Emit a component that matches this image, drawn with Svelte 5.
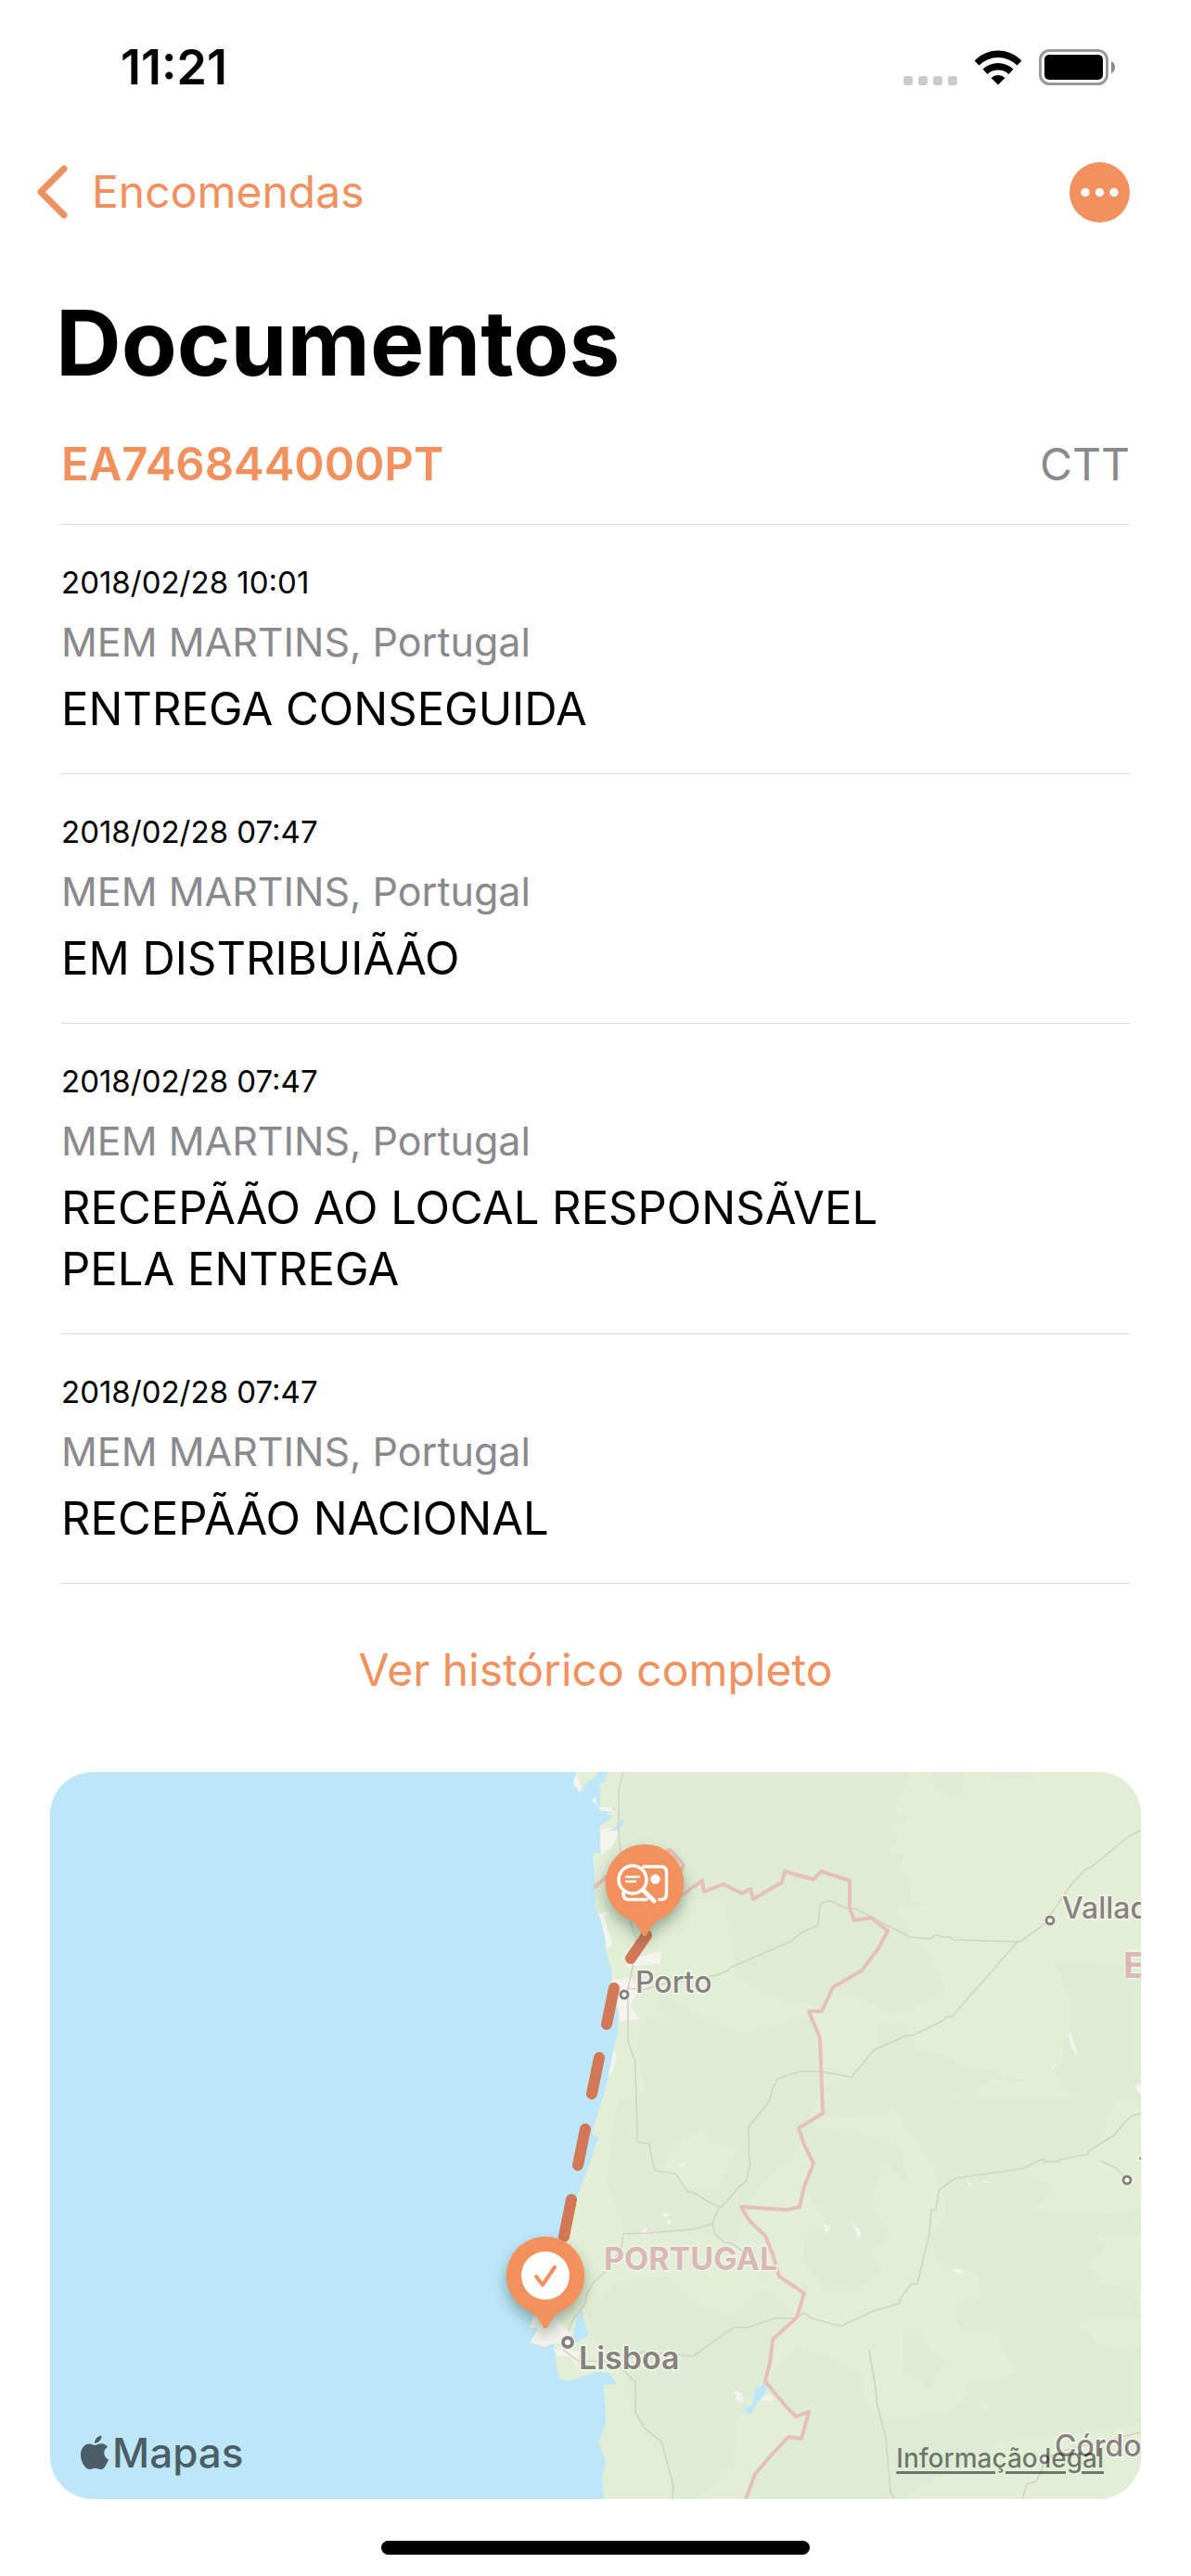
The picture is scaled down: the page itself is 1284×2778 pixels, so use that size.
<script>
  const code = "EA746844000PT";
  const carrier = "CTT";

  const events = [
    { date: "2018/02/28 10:01", place: "MEM MARTINS, Portugal", status: "ENTREGA CONSEGUIDA" },
    { date: "2018/02/28 07:47", place: "MEM MARTINS, Portugal", status: "EM DISTRIBUIÃÃO" },
    {
      date: "2018/02/28 07:47",
      place: "MEM MARTINS, Portugal",
      status: "RECEPÃÃO AO LOCAL RESPONSÃVEL PELA ENTREGA",
    },
    { date: "2018/02/28 07:47", place: "MEM MARTINS, Portugal", status: "RECEPÃÃO NACIONAL" },
  ];

  const cities = [
    { name: "Porto", x: 619, y: 240, labelX: 631, labelY: 238 },
    { name: "Valladolid", x: 1078, y: 160, labelX: 1091, labelY: 158 },
    { name: "Toledo", x: 1161, y: 440, labelX: 1173, labelY: 439 },
    { name: "Córdoba", x: 1072, y: 741, labelX: 1083, labelY: 738 },
    { name: "Lisboa", x: 558, y: 615, labelX: 570, labelY: 644, capital: true },
  ];

  const roads = [
    "M618 0L613 19V65L615 87L626 163L632 180L629 207L623 233V290L631 313L633 399L646 401L649 418L652 430L674 433L688 453H693L714 466L724 469L744 446L750 442L755 423L753 410V383L776 354L779 341L784 331L807 323H831L864 329L888 300L924 284H930L961 269L966 264H972L1043 183",
    "M623 233L639 235L663 228L719 219L731 214L733 211L798 183L810 173L828 165L830 144L834 140L841 139L859 147H868L927 178L949 180L956 175L960 178H971L974 181L1046 183L1073 163L1079 153L1101 121L1116 105L1123 102L1163 69L1176 63",
    "M559 603L563 592L576 575L579 562L587 549L601 537L616 513L618 498L646 497L694 493L714 487L721 470M714 487L717 498L726 507L734 508L749 518",
    "M553 623L569 635L616 636L639 625L693 630L737 599H753L781 589H805L812 583L821 589L846 596L854 597L888 581L916 573V568L929 552H935L948 497L950 472H955L958 451L976 438L1047 428L1071 417L1072 420H1088V418L1119 412V409L1148 391L1158 378L1166 371L1176 368",
    "M618 645L631 658V690L641 708L659 722L672 770L671 784",
    "M883 623L890 665L891 680L901 718L906 776L910 784",
    "M1048 784L1053 768L1063 765L1069 753L1073 740L1099 730L1176 712",
    "M1132 419L1149 427L1158 436",
  ];

  const border =
    "M586 125L601 112L620 98L666 85L669 84L683 100L678 110L681 133L703 117L705 129L726 121L746 131L755 126L758 137L789 119L792 107L823 116L831 107L862 117V147L867 160L885 157L903 171L893 190L875 214L844 232L832 258H818L830 287L833 368L807 384L813 402L823 422L813 447L808 469L795 472L745 469L754 484L771 500L779 520L786 544L813 562L805 588L779 612L776 637L771 657L794 685L804 695L818 690L810 719L796 717L779 735L760 757L750 784";
</script>

<div class="screen">
  <div class="status">
    <span class="status__time">11:21</span>
    <div class="status__icons">
      <svg width="58" height="10" viewBox="0 0 58 10" fill="#cbcbcb" aria-hidden="true">
        <rect width="10" height="10" rx="3" />
        <rect x="16" width="10" height="10" rx="3" />
        <rect x="32" width="10" height="10" rx="3" />
        <rect x="48" width="10" height="10" rx="3" />
      </svg>
      <svg class="status__wifi" width="50" height="38" viewBox="0 0 50 38" aria-hidden="true">
        <path d="M0 12Q0 11 1 10A35 35 0 0 1 49 10Q50 11 50 12L45.500 16.500A29 29 0 0 0 4.500 16.500Z" />
        <path d="M8.500 20.500A24 24 0 0 1 41.500 20.500L36.500 26A17 17 0 0 0 13.500 26Z" />
        <path d="M17.500 30A11 11 0 0 1 32.500 30L25 37.500Z" />
      </svg>
      <svg width="82" height="39" viewBox="0 0 82 39" aria-hidden="true">
        <rect x="1.500" y="1.500" width="72" height="36" rx="10" fill="none" stroke="#9a9a9a" stroke-width="3" />
        <rect x="6" y="6" width="63" height="27" rx="5" />
        <path d="M78 13Q82 15 82 19.500T78 26Z" fill="#8a8a8a" />
      </svg>
    </div>
  </div>

  <nav class="nav">
    <a class="nav__back" href="#encomendas">
      <svg width="34" height="60" viewBox="0 0 34 60" aria-hidden="true">
        <path d="M30 5L5 30L30 55" fill="none" stroke="currentColor" stroke-width="7" stroke-linecap="round" stroke-linejoin="round" />
      </svg>
      <span>Encomendas</span>
    </a>
    <button type="button" class="nav__more" aria-label="Mais opções">
      <svg width="65" height="65" viewBox="0 0 65 65" aria-hidden="true">
        <circle cx="32.500" cy="32.500" r="32.500" fill="currentColor" />
        <g fill="#fff">
          <circle cx="17" cy="32.500" r="4.700" />
          <circle cx="32.500" cy="32.500" r="4.700" />
          <circle cx="48" cy="32.500" r="4.700" />
        </g>
      </svg>
    </button>
  </nav>

  <main>
    <h1>Documentos</h1>

    <section class="parcel">
      <header class="parcel__head">
        <h2>{code}</h2>
        <span>{carrier}</span>
      </header>
      <ul class="events">
        {#each events as event}
          <li>
            <time>{event.date}</time>
            <p class="events__place">{event.place}</p>
            <p class="events__status">{event.status}</p>
          </li>
        {/each}
      </ul>
      <button type="button" class="history">Ver histórico completo</button>
    </section>

    <section class="map" aria-label="Mapa">
      <svg class="map__canvas" viewBox="0 0 1176 784">
        <rect width="1176" height="784" fill="#bde7f9" />

        <!-- land -->
        <path fill="#e2efd6" d="M568 0L564 12L571 22L578 12L590 3V0Z" />
        <path
          fill="#e2efd6"
          d="M601 0L598 10L593 12V38L611 39L599 45L607 48L593 58V70V87H585L587 110V123L588 147L593 157L598 177L600 197L605 213L606 237L613 257L612 280L606 307L601 333L592 363L586 383L584 390L592 395L588 402L579 430L569 455L561 490L530 560L521 587L517 599L526 600L518 615L533 620L543 616L546 640L550 655L558 657L574 652L589 647L603 648L611 660L596 661L599 680V703L591 723L599 743L595 760L597 784H1176V0Z"
        />
        <g fill="#dfecd5">
          <path d="M618 0H932L918 23L909 42L930 51L906 58L916 70L904 88L922 89L914 107L929 117L927 136L948 143L912 146L922 160L926 178L946 195L962 222L965 243L938 247L928 257L906 262L880 246L850 238L844 232L832 258L818 250L770 240L738 220L735 175L728 155L730 140L690 137L640 180L622 188L600 170L588 147L587 110L606 82L613 60Z" />
          <path d="M640 260L663 240L700 262L747 282L800 268L818 262L829 287V350L800 420L780 430L750 469L742 508L700 497L651 495L622 502L600 440L612 350L640 350V330L632 300Z" />
          <path d="M952 0H988L980 25L970 27L955 16Z" />
          <path d="M1012 0H1062L1060 6L1020 8Z" />
          <path d="M1082 206L1101 202L1176 212V360L1159 349L1140 362L1090 340L1082 322L1060 335L1016 330L990 350L970 348L955 360L930 352L890 372L835 370L832 340L860 330L895 300L890 270L922 270L935 300L975 310L978 316L1010 320L1060 335L1090 315L1103 250Z" />
          <path d="M808 378L880 391L905 398L918 407L925 445L900 420L885 462L905 500L880 520L900 535L870 560L835 560L810 525L815 495L840 490L815 450L823 422Z" />
          <path d="M900 350H1148L1132 397L1110 410L1080 422L1040 430L1076 442L1082 450L1062 470L1120 478L1176 470V500L1120 500L1142 512L1118 530L1135 555L1170 550L1176 590L1120 590L1105 595L1135 618L1176 620V702L1130 712L1020 722L1010 690L1022 678L995 680L985 660L1035 652L1042 645L1025 620L1022 600L980 600L975 575L1002 565L1000 540L960 532L948 500L965 480L965 460L955 430Z" />
          <path d="M920 602L940 604L944 617L953 625L968 638L955 648L953 658L944 665L920 645Z" />
          <path d="M806 620L840 630L875 650L876 675L891 694L940 694L970 690L990 670L1010 690L1025 722L950 764L920 784H752L760 757L779 735L796 717L810 719L818 690L804 695L771 657Z" />
          <path d="M578 580L610 552L655 545L720 548L780 560L805 588L781 612L776 637L771 657L740 700L738 750L700 784H672L660 722L641 708L620 655L611 640L582 607Z" />
          <path d="M597 665L632 664L640 708L658 724L670 784H599L595 760L599 743L591 723L599 703Z" opacity=".6" />
        </g>
        <g fill="#e2efd6">
          <path d="M674 400L704 385L710 400L742 405L720 450L688 448L660 430Z" />
          <path d="M690 515L740 524L770 555L735 585L700 575L668 548Z" opacity=".7" />
          <path d="M618 255L650 250L672 274L646 262L630 292L624 280Z" />
          <path d="M846 250L875 262L888 285L868 298L846 300Z" />
        </g>

        <!-- urban areas -->
        <g fill="#f4f4ed">
          <path d="M568 0L564 12L571 22L574 18L570 8Z" />
          <path d="M584 30L588 27L590 38L604 38L608 43L594 42Z" />
          <path d="M593 62L606 60L613 66L606 80L594 89Z" />
          <path d="M590 153L604 150L597 156L606 185L600 192L598 177L593 157Z" />
          <path d="M628 201L659 193L658 207L621 210Z" />
          <path d="M606 224L626 222L634 236L625 252L635 266L614 269L613 257L606 237Z" />
          <path d="M606 307L608 298L611 308L606 324L602 328Z" />
          <path d="M579 438L584 422L582 435Z" />
          <path d="M521 587L545 587L559 604L568 617L543 616L533 620L518 615L526 600L517 599Z" />
          <path d="M543 622L560 622L570 626L568 640L560 630L546 630Z" />
          <path d="M738 667L746 670L748 680L740 678Z" />
          <path d="M764 676L774 671L779 674L779 678L768 678Z" />
          <path d="M834 487L842 491L836 498ZM864 486L871 492L875 497L872 504ZM972 536L980 536L988 541L975 540Z" />
          <path d="M665 483L671 484L666 489ZM660 475L670 478L661 480ZM635 497L644 490L642 499ZM678 423L685 422L680 427Z" />
          <path d="M1096 280L1101 283L1108 304L1104 304ZM1080 320L1084 314L1082 322ZM1170 338L1176 335V348L1171 343Z" />
          <path d="M989 440L994 445L991 447ZM1005 440L1014 442L1006 443Z" />
        </g>

        <!-- inland water -->
        <g fill="#bde7f9">
          <path d="M574 580L576 593L581 607L568 615L562 618L564 603L569 588Z" />
          <path d="M760 665L768 662L770 655L774 662L770 672L762 681L756 692L748 691L750 685L757 683Z" />
          <path d="M609 60L618 50L618 56L612 62L600 64Z" />
        </g>

        <g fill="none" stroke="#d6d1c7" stroke-width="1.600" stroke-linejoin="round">
          {#each roads as road}
            <path d={road} />
          {/each}
        </g>
        <path d={border} fill="none" stroke="#e6c0b6" stroke-width="4" stroke-linejoin="round" />

        <g class="map__country">
          <text x="597" y="537" font-size="34">PORTUGAL</text>
          <text x="1157" y="222" font-size="38">ESPANHA</text>
        </g>
        {#each cities as city}
          <g class="map__city" class:map__city--capital={city.capital}>
            <circle cx={city.x} cy={city.y} r={city.capital ? 8 : 6} fill="#fff" />
            <circle
              cx={city.x}
              cy={city.y}
              r={city.capital ? 5 : 4}
              fill="#fff"
              stroke="#87827d"
              stroke-width={city.capital ? 4 : 3}
            />
            <text x={city.labelX} y={city.labelY}>{city.name}</text>
          </g>
        {/each}

        <path
          d="M643 176L626 201M608 233L600 272M592 308L584 347M577 385L569 424M562 461L554 501"
          fill="none"
          stroke="#d27856"
          stroke-width="12"
          stroke-linecap="round"
        />

        <g class="map__pin">
          <path fill="#f2915e" d="M641 78A42 42 0 0 1 658 158.500Q651 162 647 169L643 176Q641 178 639 176L635 169Q631 162 624 158.500A42 42 0 0 1 641 78Z" />
        </g>
        <g fill="none" stroke="#fff" stroke-width="3" stroke-linecap="round" stroke-linejoin="round">
          <path stroke-width="3.500" d="M640 102H659Q664.500 102 664.500 108V131Q664.500 137.500 659 137.500H657M643 137.500H624Q618 137.500 618 131V130" />
          <circle cx="628" cy="116" r="15" stroke-width="3.500" />
          <path d="M621 113H635M621 118H631" stroke-width="2.400" />
          <path d="M640 128L651 139" stroke-width="5" />
          <circle cx="652.500" cy="115.500" r="5.200" fill="#fff" stroke="none" />
        </g>

        <g class="map__pin">
          <path fill="#f2915e" d="M534 501A42 42 0 0 1 551 581.500Q544 585 540 592L536 599Q534 601 532 599L528 592Q524 585 517 581.500A42 42 0 0 1 534 501Z" />
        </g>
        <circle cx="534" cy="543" r="26" fill="#fff" />
        <path d="M524 544L531 553L544 534" fill="none" stroke="#f2915e" stroke-width="4" stroke-linecap="round" stroke-linejoin="round" />
      </svg>

      <div class="map__brand">
        <svg width="30" height="38" viewBox="0 0 30 38" fill="currentColor" aria-hidden="true">
          <path d="M22.500 0.500C23 4.500 19 9 15 8.800C14.600 5 18.500 0.800 22.500 0.500Z" />
          <path d="M15.200 11C17 11 19 9.300 22.400 9.300C25 9.300 27.500 10.500 29 12.800C23.500 16 24.300 24 30 26.500C28.500 30.500 25.500 37 22 37C19.500 37 18.500 35.700 15.700 35.700C12.800 35.700 11.800 37 9.500 37C5.500 37 0 29.500 0 21.500C0 14 4.500 9.500 9 9.500C11.700 9.500 13.700 11 15.200 11Z" />
        </svg>
        <span>Mapas</span>
      </div>
      <a class="map__legal" href="#legal">Informação legal</a>
    </section>
  </main>

  <div class="home"></div>
</div>

<style>
  :global(body) {
    background: #fff;
  }

  .screen {
    color: #000;
    font-family: Inter, "Liberation Sans", sans-serif;
    font-size: 48px;
    line-height: 60px;
    padding-bottom: 25px;
  }

  .status {
    display: flex;
    align-items: flex-start;
    justify-content: space-between;
    box-sizing: border-box;
    height: 146px;
    padding: 43px 82px 0 130px;
  }

  .status__time {
    font-size: 52px;
    font-weight: 600;
  }

  .status__icons {
    display: flex;
    align-items: flex-end;
    gap: 19px;
    padding-top: 10px;
  }

  .nav {
    display: flex;
    align-items: center;
    justify-content: space-between;
    height: 122px;
    padding: 0 66px 0 39px;
    color: #f2915e;
  }

  .nav__back {
    display: flex;
    align-items: center;
    gap: 26px;
    color: inherit;
    text-decoration: none;
  }

  .nav svg,
  .status svg {
    display: block;
  }

  .nav__more {
    padding: 0;
    border: none;
    background: none;
    color: inherit;
    cursor: pointer;
  }

  h1 {
    margin: 42px 60px 41px;
    font-size: 98px;
    font-weight: 700;
    line-height: 120px;
  }

  .parcel {
    padding: 0 66px;
  }

  .parcel__head {
    display: flex;
    justify-content: space-between;
    padding-bottom: 34px;
    border-bottom: 1px solid #dcdcde;
    color: #8a8a8e;
  }

  .parcel__head h2 {
    margin: 0;
    color: #f2915e;
    font-size: 49px;
    font-weight: 600;
  }

  .events {
    margin: 0;
    padding: 0;
    list-style: none;
  }

  .events li {
    display: flex;
    flex-direction: column;
    gap: 10px;
    padding: 38px 240px 36px 0;
    border-bottom: 1px solid #dcdcde;
  }

  .events time {
    font-size: 33px;
    line-height: 48px;
  }

  .events p {
    margin: 0;
  }

  .events__place {
    color: #8a8a8e;
    font-size: 43px;
  }

  .events__status {
    font-size: 49px;
    line-height: 66px;
  }

  .history {
    display: block;
    margin: 63px auto 80px;
    padding: 0;
    border: none;
    background: none;
    color: #f2915e;
    font: inherit;
    cursor: pointer;
  }

  .map {
    position: relative;
    margin: 0 54px 45px;
    border-radius: 46px;
    overflow: hidden;
  }

  .map__canvas {
    display: block;
    width: 100%;
    height: auto;
  }

  .map__city text {
    fill: #87827d;
    stroke: #f4f6ef;
    stroke-width: 3px;
    paint-order: stroke;
    font-size: 32px;
    font-weight: 500;
  }

  .map__city--capital text {
    font-size: 34px;
    font-weight: 600;
  }

  .map__country text {
    fill: #d9b8b6;
    stroke: #eef4e6;
    stroke-width: 3px;
    paint-order: stroke;
    font-weight: 700;
  }

  .map__pin {
    filter: drop-shadow(0 8px 8px rgba(40, 70, 50, 0.4));
  }

  .map__brand {
    position: absolute;
    left: 33px;
    bottom: 20px;
    display: flex;
    align-items: center;
    gap: 4px;
    color: #4c5e65;
    font-size: 44px;
    font-weight: 500;
  }

  .map__legal {
    position: absolute;
    right: 40px;
    bottom: 28px;
    color: rgba(20, 25, 20, 0.56);
    font-size: 28px;
    font-weight: 500;
    line-height: 32px;
    text-decoration-thickness: 3px;
    text-underline-offset: 4px;
  }

  .home {
    width: 36%;
    height: 15px;
    margin: 0 auto;
    border-radius: 8px;
    background: #000;
  }
</style>
